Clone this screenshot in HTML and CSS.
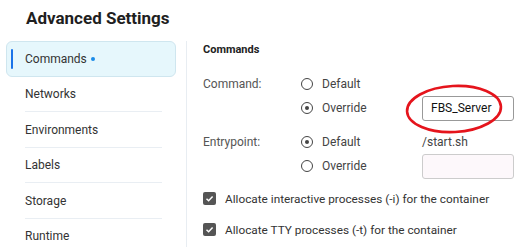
FILE: index.html
```html
<!DOCTYPE html>
<html lang="en">
<head>
    <meta charset="UTF-8">
    <title>Advanced Settings</title>
    <link rel="stylesheet" href="styles.css">
</head>
<body>
    <h1 class="page-title">Advanced Settings</h1>
    <div class="layout">
        <ul class="side-nav">
            <li class="nav-item active">Commands <span class="dot"></span></li>
            <li class="nav-item">Networks</li>
            <li class="nav-item">Environments</li>
            <li class="nav-item">Labels</li>
            <li class="nav-item">Storage</li>
            <li class="nav-item">Runtime</li>
        </ul>
        <div class="panel">
            <h2 class="panel-title">Commands</h2>
            <div class="form-group">
                <div class="field-label">Command:</div>
                <label class="radio"><span class="radio-mark"></span>Default</label>
                <div></div>
                <div></div>
                <label class="radio"><span class="radio-mark checked"></span>Override</label>
                <div class="input-cell">
                    <div class="text-input">FBS_Server</div>
                    <svg class="circle-note" width="100" height="52" viewBox="0 0 100 52">
                        <ellipse cx="49" cy="26" rx="47" ry="23" transform="rotate(-3 49 26)" fill="none" stroke="#e5141c" stroke-width="2.6"/>
                    </svg>
                </div>
            </div>
            <div class="form-group">
                <div class="field-label">Entrypoint:</div>
                <label class="radio"><span class="radio-mark checked"></span>Default</label>
                <div class="plain-value">/start.sh</div>
                <div></div>
                <label class="radio"><span class="radio-mark"></span>Override</label>
                <div class="input-cell">
                    <div class="text-input empty"></div>
                </div>
            </div>
            <div class="checks">
                <label class="check"><span class="check-mark"><svg width="9" height="9" viewBox="0 0 9 9"><path d="M1.5 4.7 L3.6 6.7 L7.6 2.4" fill="none" stroke="#fff" stroke-width="1.5"/></svg></span>Allocate interactive processes (-i) for the container</label>
                <label class="check"><span class="check-mark"><svg width="9" height="9" viewBox="0 0 9 9"><path d="M1.5 4.7 L3.6 6.7 L7.6 2.4" fill="none" stroke="#fff" stroke-width="1.5"/></svg></span>Allocate TTY processes (-t) for the container</label>
            </div>
        </div>
    </div>
</body>
</html>
```

FILE: styles.css
```css
body {
    margin: 0;
    font-family: Roboto, "Liberation Sans", sans-serif;
    color: #333;
    background: #fff;
    width: 520px;
    height: 247px;
    overflow: hidden;
}
.page-title {
    margin: 0;
    padding: 7px 0 0 26px;
    font-size: 17px;
    line-height: 22px;
    font-weight: 700;
    color: #1f1f1f;
}
.layout {
    display: flex;
    margin-top: 12px;
}
.side-nav {
    list-style: none;
    margin: 0;
    padding: 0 0 0 6px;
    width: 180px;
    flex-shrink: 0;
}
.nav-item {
    position: relative;
    box-sizing: border-box;
    width: 170px;
    height: 35.5px;
    display: flex;
    align-items: center;
    padding-left: 19px;
    font-size: 12px;
    color: #333;
}
.nav-item::after {
    content: "";
    position: absolute;
    left: 19px;
    right: 14px;
    bottom: 0;
    border-bottom: 1px solid #e9eef3;
}
.nav-item.active::after,
.nav-item:last-child::after {
    display: none;
}
.nav-item.active {
    background: #e6f7fc;
    border: 1px solid #cfe6ef;
    border-radius: 6px;
    padding-left: 18px;
}
.nav-item.active::before {
    content: "";
    position: absolute;
    left: 4px;
    top: 7px;
    bottom: 7px;
    width: 2px;
    background: #1a73e8;
    border-radius: 1px;
}
.dot {
    display: inline-block;
    width: 4px;
    height: 4px;
    border-radius: 50%;
    background: #1a8be8;
    margin-left: 4px;
}
.panel {
    border-left: 1px solid #e8edf2;
    padding-left: 16px;
    flex: 1;
    height: 215px;
}
.panel-title {
    margin: 0;
    padding-top: 2px;
    font-size: 11px;
    line-height: 14px;
    font-weight: 700;
    color: #222;
}
.form-group {
    display: grid;
    grid-template-columns: 98px 121px 92px;
    grid-auto-rows: 24px;
    margin-top: 15px;
}
.form-group + .form-group {
    margin-top: 10px;
}
.field-label {
    display: flex;
    align-items: center;
    font-size: 12px;
    color: #555;
}
.radio {
    display: flex;
    align-items: center;
    font-size: 12px;
    color: #444;
}
.radio-mark {
    box-sizing: border-box;
    width: 12px;
    height: 12px;
    border: 1.6px solid #444;
    border-radius: 50%;
    margin: 0 9px 0 0;
    display: flex;
    align-items: center;
    justify-content: center;
}
.radio-mark.checked::after {
    content: "";
    width: 4px;
    height: 4px;
    border-radius: 50%;
    background: #444;
}
.plain-value {
    display: flex;
    align-items: center;
    font-size: 12px;
    color: #444;
}
.input-cell {
    position: relative;
    display: flex;
    align-items: center;
}
.text-input {
    box-sizing: border-box;
    width: 92px;
    height: 25px;
    border: 1px solid #999;
    border-radius: 3px;
    padding-left: 8px;
    display: flex;
    align-items: center;
    font-size: 12px;
    color: #111;
    background: #fff;
}
.text-input.empty {
    border-color: #ccc;
    background: #fdf8fb;
}
.circle-note {
    position: absolute;
    left: -17px;
    top: -13px;
    pointer-events: none;
}
.checks {
    margin-top: 5px;
}
.check {
    display: flex;
    align-items: center;
    height: 31px;
    font-size: 11.8px;
    color: #333;
}
.check-mark {
    width: 13px;
    height: 13px;
    border-radius: 2px;
    background: #555;
    margin-right: 9px;
    display: flex;
    align-items: center;
    justify-content: center;
}
```
